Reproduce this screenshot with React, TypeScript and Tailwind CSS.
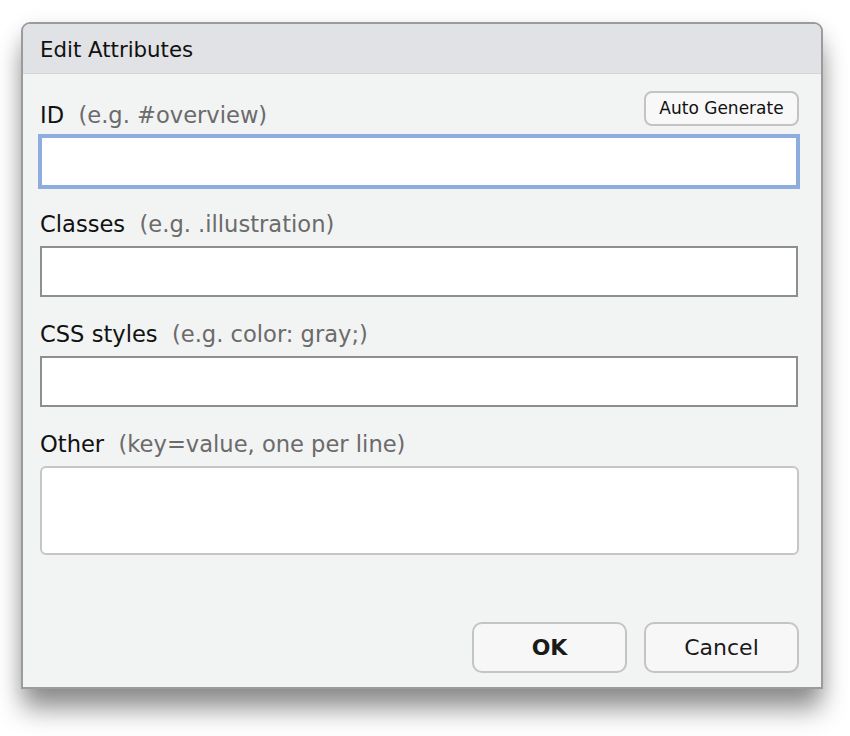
import React from "react";

const font = { fontFamily: '"DejaVu Sans", Verdana, sans-serif' };

function Label({ name, hint }: { name: string; hint: string }) {
  return (
    <div className="text-[22.6px] leading-[26px] whitespace-pre">
      <span className="text-[#111111]">{name}</span>
      <span className="text-[#6b6b6b]">{"  " + hint}</span>
    </div>
  );
}

export default function App() {
  return (
    <div className="w-[850px] h-[736px] bg-white pt-[22px] pl-[21px]" style={font}>
      <div className="w-[802px] h-[667px] border-2 border-[#9b9b9b] rounded-t-[9px] bg-[#f2f3f3] flex flex-col shadow-[0_22px_26px_-2px_rgba(0,0,0,0.42),0_4px_20px_rgba(0,0,0,0.1)]">
        <div className="h-[50px] shrink-0 bg-[#e1e2e5] border-b border-[#d4d5d7] rounded-t-[7px] flex items-center pl-[17px] pt-[3px] text-[21.3px] text-[#111111]">
          Edit Attributes
        </div>
        <div className="flex-1 flex flex-col pl-[17px] pr-[23px] pt-[17px]">
          <div className="flex items-end justify-between">
            <Label name="ID" hint="(e.g. #overview)" />
            <button className="mb-[2px] mr-[-1px] h-[35px] w-[155px] rounded-[8px] border-2 border-[#c3c3c3] bg-[#f8f8f8] text-[17px] text-[#111111]">
              Auto Generate
            </button>
          </div>
          <div className="mt-[8px] h-[51px] bg-white border-2 border-[#8eaddf] ring-2 ring-[#8eaddf]" />
          <div className="mt-[24px]">
            <Label name="Classes" hint="(e.g. .illustration)" />
          </div>
          <div className="mt-[9px] h-[51px] bg-white border-2 border-[#8e8e8e]" />
          <div className="mt-[24px]">
            <Label name="CSS styles" hint="(e.g. color: gray;)" />
          </div>
          <div className="mt-[9px] h-[51px] bg-white border-2 border-[#8e8e8e]" />
          <div className="mt-[24px]">
            <Label name="Other" hint="(key=value, one per line)" />
          </div>
          <div className="mt-[9px] h-[89px] mr-[-1px] bg-white border-2 border-[#c6c6c6] rounded-[6px]" />
          <div className="flex-1" />
          <div className="flex justify-end gap-[17px] pb-[14px] mr-[-1px]">
            <button className="w-[155px] h-[51px] rounded-[10px] border-2 border-[#c4c4c4] bg-[#f7f7f7] text-[22px] font-bold text-[#1a1a1a]">
              OK
            </button>
            <button className="w-[155px] h-[51px] rounded-[10px] border-2 border-[#c4c4c4] bg-[#f7f7f7] text-[22px] text-[#1a1a1a]">
              Cancel
            </button>
          </div>
        </div>
      </div>
    </div>
  );
}
